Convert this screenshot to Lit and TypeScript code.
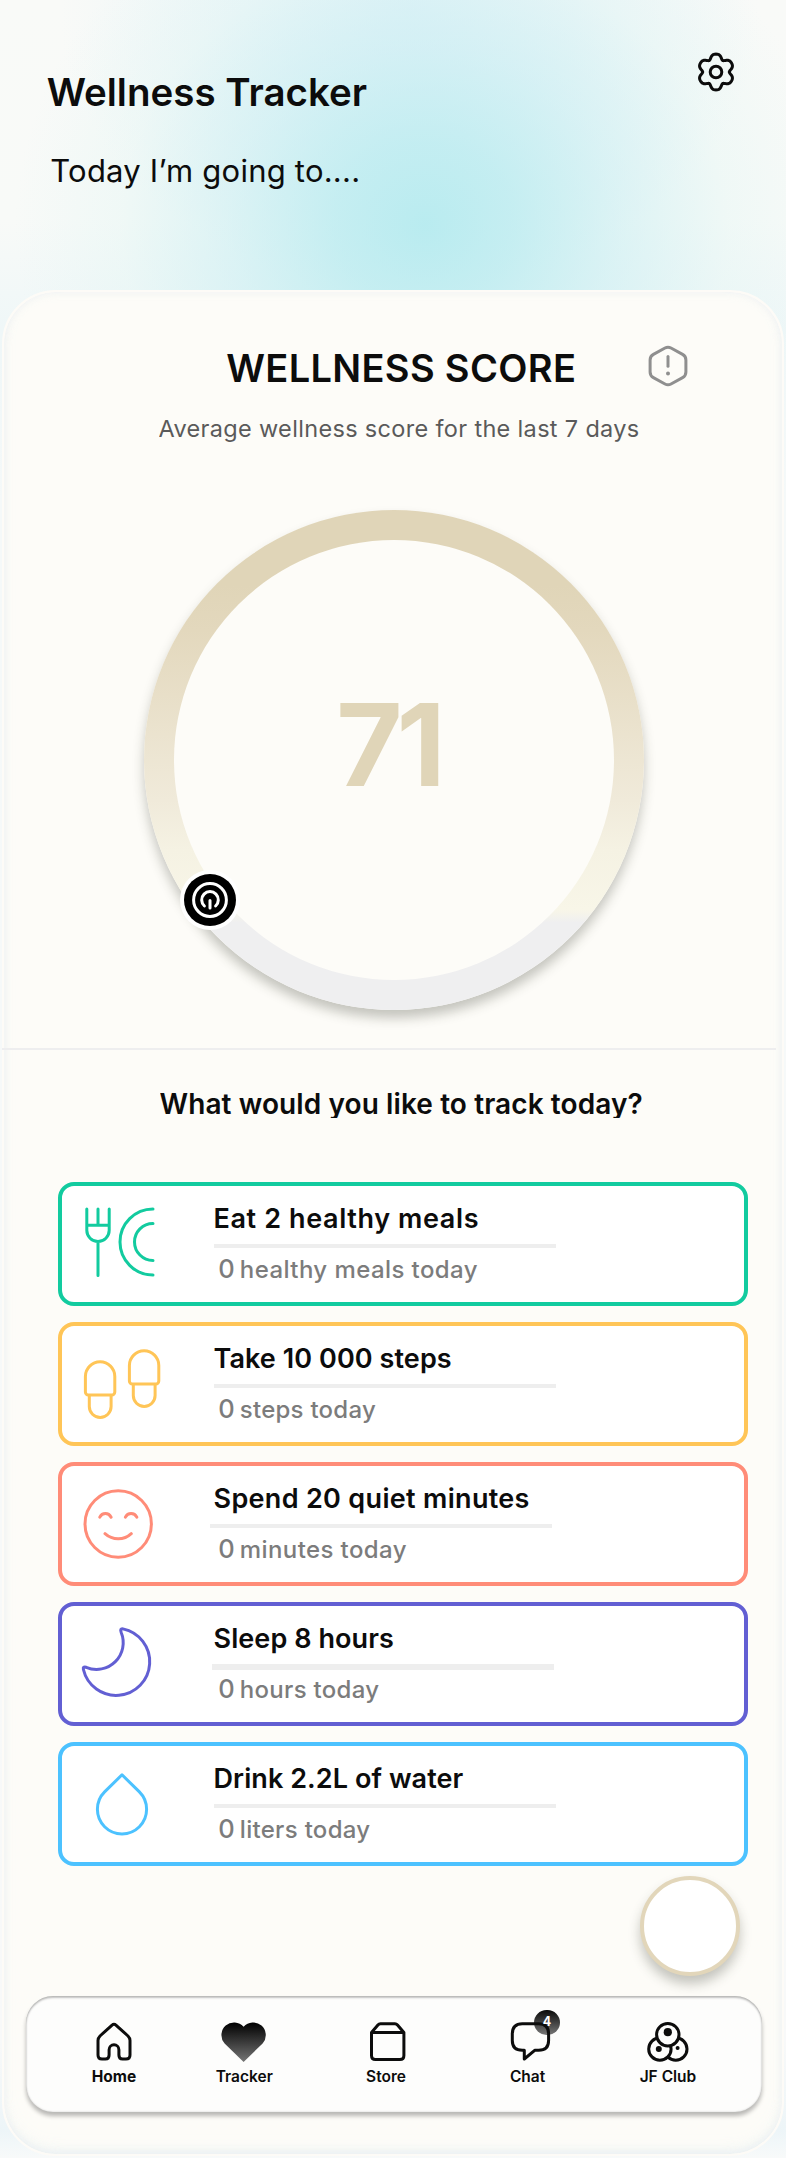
import { LitElement, html, css, svg, SVGTemplateResult } from "lit";
import { styleMap } from "lit/directives/style-map.js";

interface Goal {
  title: string;
  unit: string;
  color: string;
  titleTrack: number;
  unitTrack: number;
  lineShift: number;
  lineHeight: number;
  icon: SVGTemplateResult;
}

interface Tab {
  label: string;
  icon: SVGTemplateResult;
  bold?: boolean;
  badge?: number;
}

const shoe = svg`
  <path d="M85.4 54.5a14.7 14.7 0 0 1 29.4 0V70a3 3 0 0 1-3 3H88.4a3 3 0 0 1-3-3Z" />
  <path d="M89.3 73.5V84.5a10.9 10.9 0 0 0 21.8 0V73.5" />
`;

const goals: Goal[] = [
  {
    title: "Eat 2 healthy meals", unit: "healthy meals today", color: "#12cb9f",
    titleTrack: 0.62, unitTrack: 0.42, lineShift: 0, lineHeight: 4,
    icon: svg`
      <path d="M86.8 27V48.3a11.2 11.2 0 0 0 22.4 0V27M98 27v16M86.8 43.3h22.4M98 60v33.5" />
      <path d="M153 27a33 33 0 0 0 0 66M153 41.4a18.5 18.5 0 0 0 0 37" />`,
  },
  {
    title: "Take 10 000 steps", unit: "steps today", color: "#ffc557",
    titleTrack: 0.08, unitTrack: 0.25, lineShift: 0, lineHeight: 4,
    icon: svg`<g>${shoe}</g><g transform="translate(44 -11)">${shoe}</g>`,
  },
  {
    title: "Spend 20 quiet minutes", unit: "minutes today", color: "#ff8c78",
    titleTrack: 0.32, unitTrack: 0.4, lineShift: -4, lineHeight: 4,
    icon: svg`
      <circle cx="118.2" cy="62" r="33.2" />
      <path d="M99.8 55.2c2.4-4.8 8.8-4.8 11.3 0M125.4 55.2c2.4-4.8 9-4.8 11.4 0M105 71.7c7.5 6.8 19 6.8 26.3 0" />`,
  },
  {
    title: "Sleep 8 hours", unit: "hours today", color: "#625fd3",
    titleTrack: 0.08, unitTrack: 0.3, lineShift: -2, lineHeight: 6,
    icon: svg`<path d="M123 26.9A33.6 33.6 0 1 1 83.4 67.5Q82.6 64.2 86.2 65.3A26.7 26.7 0 0 0 121.2 30.5Q119.6 26.3 123 26.9Z" />`,
  },
  {
    title: "Drink 2.2L of water", unit: "liters today", color: "#4cc2ff",
    titleTrack: 0.08, unitTrack: 0.3, lineShift: 0, lineHeight: 4,
    icon: svg`<path d="M122 32.8L104.6 49.9A24.6 24.6 0 1 0 139.4 49.9Z" />`,
  },
];

const tabs: Tab[] = [
  {
    label: "Home", bold: true,
    icon: svg`<path d="M111.8 29.3Q114 27.3 116.2 29.3L128 40Q130 42 130 44.5V59Q130 63 126 63H122.6Q118.9 63 118.9 59V53.7A4.9 4.9 0 0 0 109.1 53.7V59Q109.1 63 105.4 63H102Q98 63 98 59V44.5Q98 42 100 40Z" transform="translate(-88 -20)" />`,
  },
  {
    label: "Tracker",
    icon: svg`
      <defs><linearGradient id="heart" x1="0" y1="0" x2="0" y2="1"><stop offset="0" stop-color="#000" /><stop offset="1" stop-color="#757575" /></linearGradient></defs>
      <path fill="url(#heart)" stroke="none" d="M25.6 46L6.6 27.5A12.6 12.6 0 0 1 25.6 10.7A12.6 12.6 0 0 1 44.6 27.5Z" />`,
  },
  {
    label: "Store",
    icon: svg`<path transform="translate(1.7 0)" d="M9.8 16.5L16.2 9Q17.2 7.8 18.8 7.8H33.2Q34.8 7.8 35.8 9L42.2 16.5V39.5Q42.2 43.5 38.2 43.5H13.8Q9.8 43.5 9.8 39.5ZM9.8 16.5H42.2" />`,
  },
  {
    label: "Chat", badge: 4,
    icon: svg`<path d="M20.3 7.8H36.7Q46.6 7.8 46.6 18V24.5Q46.6 34.3 36.7 34.3H32.7L22.3 43V34.3H20.3Q10.3 34.3 10.3 24.5V18Q10.3 7.8 20.3 7.8Z" />`,
  },
  {
    label: "JF Club",
    icon: svg`
      <g fill="#fdfdfc">
        <circle cx="33.8" cy="33" r="11.2" /><circle cx="17.9" cy="33" r="11.2" /><circle cx="25.8" cy="18.7" r="11.2" />
      </g>
      <g fill="#0c0c0c" stroke="none">
        <circle cx="25.8" cy="16.2" r="4.1" /><circle cx="16.8" cy="33" r="3" /><circle cx="35.6" cy="32" r="2" />
      </g>`,
  },
];

/** Closed outline of the six-lobed settings cog, centred on the origin. */
function cogPath(): string {
  const pts: string[] = [];
  for (let d = 0; d < 360; d += 3) {
    const a = (d * Math.PI) / 180;
    const r = 16.1 - 2.3 * Math.cos(6 * a) - 0.5 * Math.cos(12 * a);
    pts.push(`${(r * Math.cos(a)).toFixed(2)} ${(r * Math.sin(a)).toFixed(2)}`);
  }
  return `M${pts.join("L")}Z`;
}

class GoalCard extends LitElement {
  static properties = { goal: { attribute: false } };
  goal!: Goal;

  static styles = css`
    :host { display: block; }
    .card {
      box-sizing: border-box; height: 124px; display: flex; gap: 51.5px;
      border: 4px solid; border-radius: 16px; background: #fff; padding: 16px;
    }
    svg { flex: none; width: 84px; height: 84px; fill: none; stroke: currentColor; stroke-width: 3; stroke-linecap: round; stroke-linejoin: round; }
    .body { display: flex; flex-direction: column; align-items: flex-start; white-space: nowrap; }
    .title { font-size: 27px; line-height: 32px; font-weight: 600; color: #0c0c0c; margin-top: 0.5px; }
    .track { height: 12px; margin: 9.5px 0 0; }
    .line { width: 342px; background: #eee; }
    .sub { display: flex; align-items: baseline; margin: -1.2px 0 0 4.8px; font-size: 24px; line-height: 28px; font-weight: 500; color: #7c7c7c; }
    .count { font-size: 25.5px; width: 21.5px; letter-spacing: 0; }
  `;

  render() {
    const g = this.goal;
    return html`
      <div class="card" style=${styleMap({ color: g.color, borderColor: g.color })}>
        <svg viewBox="78 20 84 84">${g.icon}</svg>
        <div class="body">
          <div class="title" style=${styleMap({ letterSpacing: `${g.titleTrack}px` })}>${g.title}</div>
          <div class="track">
            <div class="line" style=${styleMap({ height: `${g.lineHeight}px`, marginLeft: `${g.lineShift + 0.5}px` })}></div>
          </div>
          <div class="sub" style=${styleMap({ letterSpacing: `${g.unitTrack}px` })}>
            <span class="count">0</span><span>${g.unit}</span>
          </div>
        </div>
      </div>`;
  }
}
customElements.define("goal-card", GoalCard);

class AppRoot extends LitElement {
  static styles = css`
    :host {
      display: block; width: 786px; height: 2158px; overflow: hidden;
      font-family: Inter, "Open Sans", sans-serif; color: #0c0c0c;
      background:
        radial-gradient(ellipse 410px 370px at 425px 225px, rgba(174, 233, 238, .84) 0, rgba(180, 234, 239, .72) 22%, rgba(192, 236, 241, .48) 48%, rgba(212, 243, 240, .24) 74%, rgba(225, 246, 243, 0) 100%) 0 0 / 786px 360px no-repeat,
        radial-gradient(ellipse 350px 280px at 410px 10px, rgba(205, 235, 248, .5) 0, rgba(210, 238, 248, .35) 45%, rgba(225, 243, 250, 0) 100%) 0 0 / 786px 360px no-repeat,
        linear-gradient(#f9faf8 0, #f8faf8 220px, #eff7f8 330px, #f5f9f9 500px, #f8f9f9 2040px, #edf5f8 2130px, #f8fafa 2158px);
    }
    .header { box-sizing: border-box; height: 290px; display: flex; justify-content: space-between; align-items: flex-start; padding: 0 48px 0 46.7px; }
    .greeting { display: flex; flex-direction: column; gap: 35px; padding-top: 67.5px; }
    h1, h2, h3, p { margin: 0; white-space: nowrap; }
    h1 { font-size: 38.5px; line-height: 48px; font-weight: 600; }
    .lead { font-size: 31px; line-height: 40px; letter-spacing: .22px; padding-left: 3.6px; }
    .icon { width: 44px; height: 44px; fill: none; stroke-width: 3; stroke-linecap: round; stroke-linejoin: round; }
    .cog { stroke: #0c0c0c; margin-top: 50px; }
    .info { stroke: #8f8f8f; }

    .panel {
      box-sizing: border-box; height: 1866px; margin: 0 2px; border: 2px solid #fdfbf7; border-radius: 54px;
      background: #fdfcf8; box-shadow: inset 0 0 10px rgba(215, 226, 234, .38), inset 0 -8px 18px -8px rgba(205, 228, 240, .4);
      display: flex; flex-direction: column; padding-top: 52px;
    }
    .score-head { display: flex; align-items: flex-start; height: 48px; padding-left: 222.2px; }
    h2 { font-size: 38px; line-height: 48px; font-weight: 600; letter-spacing: .34px; width: 419.8px; }
    .caption { height: 27px; overflow: hidden; margin: 23px 0 0 154.5px; font-size: 23.5px; line-height: 28px; letter-spacing: .33px; color: #5a5a5a; }

    .dial {
      position: relative; box-sizing: border-box; width: 500px; height: 500px; margin: 68px 0 0 140px; padding: 30px; border-radius: 50%;
      background: linear-gradient(#e0d5b8 0, #e0d5b8 15%, #e3d8bd 24%, #f0eada 58%, #f5f2e3 68%, #f8f6e8 80%, #efeff0 82.5%);
      box-shadow: 0 8px 12px rgba(50, 55, 40, .28);
    }
    .face { box-sizing: border-box; width: 440px; height: 440px; border-radius: 50%; background: #fdfcf8; display: flex; align-items: center; justify-content: center; padding: 0 12px 31px 0; }
    .value { font-size: 114px; line-height: 114px; font-weight: 700; letter-spacing: -6px; color: #e0d5b8; }
    .knob { position: absolute; left: 36px; top: 360px; width: 60px; height: 60px; }

    .rule { height: 2px; width: 774px; margin: 38px 0 0 -2px; background: #eeeeef; }
    h3 { height: 30px; overflow: hidden; margin: 38px 0 0 155.5px; font-size: 28px; line-height: 32px; font-weight: 600; letter-spacing: .1px; }
    .goals { display: flex; flex-direction: column; gap: 16px; width: 690px; margin: 64px 0 0 54px; }
    .fab { box-sizing: border-box; width: 100px; height: 100px; margin: 10px 0 0 636px; border: 4px solid #e2d6ba; border-radius: 50%; background: #fff; box-shadow: 0 8px 12px rgba(50, 55, 40, .28); flex: none; }

    .tabs {
      box-sizing: border-box; width: 736px; height: 116px; margin: 20px 0 0 22px; padding: 20px 0 0 23px; border-radius: 27px; background: #fdfdfc;
      box-shadow: inset 0 2px 2px rgba(0, 0, 0, .22), inset 0 0 2px rgba(0, 0, 0, .22), 0 4px 4px rgba(0, 0, 0, .27);
      display: grid; grid-template-columns: 130px 130.6px 152.8px 130.4px 150.4px; align-items: start; flex: none;
    }
    .tab { position: relative; display: flex; flex-direction: column; align-items: center; gap: 3.2px; font-size: 15.5px; line-height: 20px; font-weight: 600; }
    .tab.bold { font-weight: 700; }
    .tab svg { position: relative; width: 52px; height: 48px; fill: none; stroke: #0c0c0c; stroke-width: 3; stroke-linejoin: round; stroke-linecap: round; }
    .dot, .count { position: absolute; left: calc(50% + 6.7px); top: -6px; width: 25.4px; height: 25.4px; border-radius: 50%; }
    .dot { background: linear-gradient(#0a0a0a, #777); }
    .count { color: #fff; font-size: 12.5px; line-height: 24px; font-weight: 700; text-align: center; }
  `;

  render() {
    return html`
      <header class="header">
        <div class="greeting">
          <h1>Wellness Tracker</h1>
          <p class="lead">Today I’m going to....</p>
        </div>
        <svg class="icon cog" viewBox="-22 -22 44 44"><path d=${cogPath()} /><circle r="5.8" /></svg>
      </header>
      <main class="panel">
        <div class="score-head">
          <h2>WELLNESS SCORE</h2>
          <svg class="icon info" viewBox="-22 -22 44 44">
            <path d="M-3 -18Q0 -19.6 3 -18L14.6 -11.6Q17.9 -9.8 17.9 -6V6Q17.9 9.8 14.6 11.6L3 18Q0 19.6 -3 18L-14.6 11.6Q-17.9 9.8 -17.9 6V-6Q-17.9 -9.8 -14.6 -11.6Z" />
            <path d="M0 -9.5V.3" /><circle cy="7.4" r="2" fill="#8f8f8f" stroke="none" />
          </svg>
        </div>
        <p class="caption">Average wellness score for the last 7 days</p>
        <div class="dial">
          <div class="face"><span class="value">71</span></div>
          <svg class="knob" viewBox="-30 -30 60 60" fill="none" stroke="#fff" stroke-width="3" stroke-linecap="round">
            <circle r="30" fill="#fff" stroke="none" /><circle r="26" fill="#000" stroke="none" />
            <circle r="16.4" /><path d="M-5.6 6A8.3 8.3 0 1 1 5.6 6M0 .5V8" />
          </svg>
        </div>
        <div class="rule"></div>
        <h3>What would you like to track today?</h3>
        <div class="goals">${goals.map((g) => html`<goal-card .goal=${g}></goal-card>`)}</div>
        <div class="fab"></div>
        <nav class="tabs">
          ${tabs.map((t) => html`
            <div class="tab ${t.bold ? "bold" : ""}">
              ${t.badge ? html`<span class="dot"></span>` : ""}
              <svg viewBox="0 0 52 48">${t.icon}</svg>
              <span>${t.label}</span>
              ${t.badge ? html`<span class="count">${t.badge}</span>` : ""}
            </div>`)}
        </nav>
      </main>`;
  }
}
customElements.define("app-root", AppRoot);
